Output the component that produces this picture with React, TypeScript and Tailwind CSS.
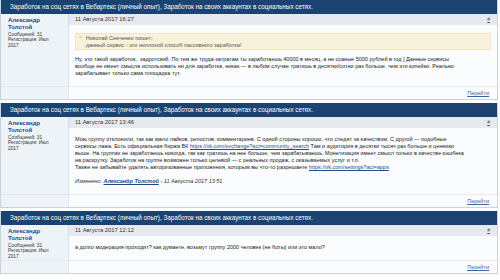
import React from "react";

type Post = {
  date: string;
  quote?: { author: string; text: string };
  lines: React.ReactNode[];
  edited?: { by: string; date: string };
};

const threadTitle =
  "Заработок на соц сетях в Вебартекс (личный опыт), Заработок на своих аккаунтах в социальных сетях.";

const link = (href: string) => (
  <a className="text-[#1c4f8f] underline">{href}</a>
);

const posts: Post[] = [
  {
    date: "11 Августа 2017 16:27",
    quote: {
      author: "Николай Сенченко пишет:",
      text: "данный сервис - это неплохой способ пассивного заработка!",
    },
    lines: [
      "Ну, это такой заработок.. задротский. По тем же труда-затратам ты заработаешь 40000 в месяц, а не ссаные 5000 рублей в год ] Данные сервисы",
      "вообще не имеет смысла использовать ни для заработка, никак — в любом случае тратишь в десятки/сотни раз больше, чем эти копейки. Реально",
      "зарабатывает только сама площадка тут.",
    ],
  },
  {
    date: "11 Августа 2017 13:46",
    lines: [
      "Мою группу отклонили, так как мало лайков, репостов, комментариев. С одной стороны хорошо, что следят за качеством. С другой — подобные",
      <>
        сервисы лажа. Есть официальная биржа ВК{" "}
        {link("https://vk.com/exchange?act=community_search")} Там и аудитория в десятки тысяч раз больше и ценники
      </>,
      "выше. На группах не заработаешь никогда, так как тратишь на нее больше, чем зарабатываешь. Монетизация имеет смысл только в качестве кэшбека",
      "на раскрутку. Заработок на группе возможен только целевой — с реальных продаж, с оказываемых услуг и т.п.",
      <>
        Также не забывайте удалять авторизованные приложения, которым вы что-то разрешаете{" "}
        {link("https://vk.com/settings?act=apps")}
      </>,
    ],
    edited: { by: "Александр Толстой", date: "11 Августа 2017 13:51" },
  },
  {
    date: "11 Августа 2017 12:12",
    lines: [
      "а долго модерация проходит? как думаете, возьмут группу 2000 человек (не боты) или это мало?",
    ],
  },
];

function PostBlock({ post }: { post: Post }) {
  return (
    <div className="border-x border-b border-[#c9d3de] bg-white">
      {/* thread title bar */}
      <div className="h-[14px] bg-[#1b4372] pl-[9px] text-[6.3px] leading-[14px] text-white whitespace-nowrap">
        {threadTitle}
      </div>

      <div className="grid grid-cols-[68px_1fr]">
        {/* user info */}
        <div className="border-r border-[#d6dee7] bg-[#eef3f8] px-[7px] pt-[3px]">
          <div className="text-[6px] font-bold leading-[7px] text-[#1d4b87]">
            Александр
            <br />
            Толстой
          </div>
          <div className="mt-[0.5px] text-[4.8px] leading-[5.6px] text-[#333]">
            Сообщений: 31
            <br />
            Регистрация: Июл
            <br />
            2017
          </div>
        </div>

        {/* message */}
        <div className="bg-[#fbfcfd]">
          <div className="flex h-[11px] items-center justify-between bg-[#e6eaf0] pl-[6px] pr-[7px]">
            <span className="text-[5.8px] text-[#333]">{post.date}</span>
            <span className="text-[5px] text-[#556] underline">#</span>
          </div>
          <div className="px-[6px] pt-[8px] pb-[9px] text-[5.5px] leading-[7px] text-[#222] whitespace-nowrap">
            {post.quote && (
              <div className="mb-[6px] flex gap-[4px] border border-[#efe6c0] bg-[#f8f2da] px-[3px] py-[0.5px] text-[5.5px] leading-[7px] text-[#555]">
                <span className="font-bold text-[#b9ad7a]">“</span>
                <div>
                  {post.quote.author}
                  <br />
                  {post.quote.text}
                </div>
              </div>
            )}
            {post.lines.map((l, i) => (
              <div key={i}>{l}</div>
            ))}
            {post.edited && (
              <div className="mt-[7px] italic text-[#333]">
                Изменено:{" "}
                <span className="font-bold text-[#1d4b87] underline">{post.edited.by}</span>{" "}
                - {post.edited.date}
              </div>
            )}
          </div>
        </div>

        {/* footer */}
        <div className="h-[13px] border-t border-r border-dotted border-[#d6dee7] bg-[#eef3f8]" />
        <div className="flex h-[13px] items-center justify-end border-t border-dotted border-[#d6dee7] bg-[#fbfcfd] pr-[8px]">
          <a className="text-[5.5px] text-[#3a66a0] underline">Перейти</a>
        </div>
      </div>
    </div>
  );
}

export default function App() {
  return (
    <div
      className="flex w-[500px] flex-col gap-[3px] bg-white pr-[2px]"
      style={{ fontFamily: '"Liberation Sans", Arial, sans-serif' }}
    >
      {posts.map((p) => (
        <PostBlock key={p.date} post={p} />
      ))}
    </div>
  );
}
